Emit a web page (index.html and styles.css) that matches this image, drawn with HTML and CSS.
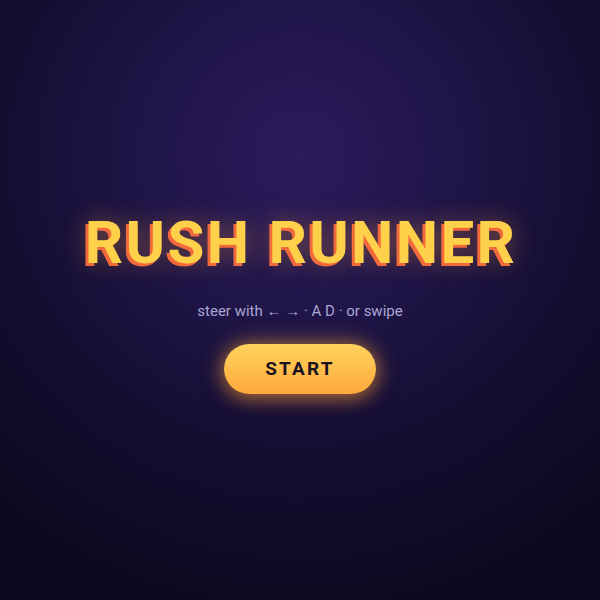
FILE: index.html
```html
<!DOCTYPE html>
<html lang="en">
<head>
<meta charset="utf-8">
<title>Rush Runner</title>
<link rel="stylesheet" href="styles.css">
</head>
<body>
<main class="menu">
  <h1 class="title">RUSH RUNNER</h1>
  <p class="hint">steer with ← → · A D · or swipe</p>
  <button class="start" type="button">START</button>
</main>
</body>
</html>
```

FILE: styles.css
```css
html, body {
  margin: 0;
  height: 100%;
}

body {
  background: radial-gradient(ellipse 75% 75% at 50% 26%, #2c1b5d 0%, #1f1548 35%, #150e33 65%, #0d0920 100%);
  font-family: Roboto, "Noto Sans", sans-serif;
}

.menu {
  height: 100%;
  display: flex;
  flex-direction: column;
  align-items: center;
  justify-content: center;
  padding-top: 6px;
  box-sizing: border-box;
}

.title {
  margin: 0 0 0 2px;
  font-size: 60px;
  font-weight: 700;
  letter-spacing: 2.3px;
  line-height: 1;
  color: #ffd14a;
  text-shadow:
    -3px 3px 0 #f26a3c,
    0 0 24px rgba(255, 160, 60, 0.45);
}

.hint {
  margin: 29px 0 0;
  font-size: 15px;
  color: #aaa5d4;
}

.start {
  margin-top: 24px;
  width: 152px;
  height: 50px;
  border: 0;
  border-radius: 25px;
  background: linear-gradient(180deg, #ffd35c 0%, #ffa93d 100%);
  color: #1b1220;
  font-family: Roboto, "Noto Sans", sans-serif;
  font-size: 19px;
  font-weight: 700;
  letter-spacing: 2.2px;
  box-shadow: 0 0 22px rgba(255, 165, 60, 0.6), 0 6px 18px rgba(255, 140, 40, 0.3);
  cursor: pointer;
}
```
